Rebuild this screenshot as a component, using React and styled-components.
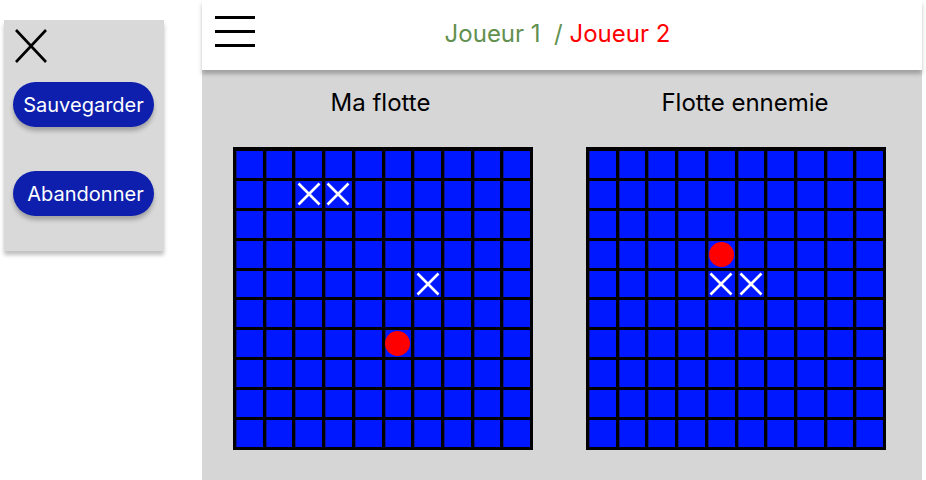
import React from "react";
import styled, { createGlobalStyle } from "styled-components";

const GlobalStyle = createGlobalStyle`
  html, body {
    margin: 0;
    padding: 0;
    background: #ffffff;
    font-family: Inter, "Noto Sans", sans-serif;
  }
  * { box-sizing: border-box; }
`;

const Page = styled.div`
  display: flex;
  align-items: flex-start;
  width: 926px;
  height: 480px;
  overflow: hidden;
`;

const SidePanel = styled.aside`
  width: 160px;
  height: 231px;
  margin: 20px 0 0 4px;
  padding: 9px 10px 0 9px;
  background: #d9d9d9;
  box-shadow: 0 4px 4px rgba(0, 0, 0, 0.25);
  display: flex;
  flex-direction: column;
  align-items: flex-start;
`;

const CloseButton = styled.button`
  width: 32px;
  height: 34px;
  margin-left: 2px;
  padding: 0;
  border: none;
  background: transparent;
  display: block;
  cursor: pointer;
  svg { display: block; }
`;

const ActionButton = styled.button`
  width: 141px;
  height: 45px;
  margin-top: ${(p) => p.$top}px;
  border: none;
  border-radius: 23px;
  background: #0e1fad;
  color: #ffffff;
  font-family: Inter, "Noto Sans", sans-serif;
  font-size: 20px;
  line-height: 24px;
  padding: 0 0 0 ${(p) => p.$pad}px;
  box-shadow: 0 4px 4px rgba(0, 0, 0, 0.25);
  cursor: pointer;
`;

const Main = styled.main`
  width: 720px;
  height: 480px;
  margin-left: 38px;
  background: #d6d6d6;
  display: flex;
  flex-direction: column;
`;

const Header = styled.header`
  height: 70px;
  background: #ffffff;
  box-shadow: 0 4px 4px rgba(0, 0, 0, 0.25);
  display: grid;
  grid-template-columns: 1fr auto 1fr;
  align-items: start;
  position: relative;
  z-index: 1;
`;

const Burger = styled.button`
  justify-self: start;
  margin: 16px 0 0 13px;
  padding: 0;
  width: 40px;
  border: none;
  background: transparent;
  display: flex;
  flex-direction: column;
  gap: 11px;
  cursor: pointer;
`;

const BurgerBar = styled.span`
  display: block;
  width: 40px;
  height: 3px;
  background: #000000;
`;

const Players = styled.h1`
  margin: 19px 9px 0 0;
  font-family: Inter, "Noto Sans", sans-serif;
  font-weight: 400;
  font-size: 24px;
  line-height: 29px;
  white-space: pre;
`;

const Player = styled.span`
  color: ${(p) => p.$color};
`;

const Boards = styled.section`
  display: flex;
  gap: 53px;
  padding: 18px 0 0 31px;
`;

const Board = styled.div`
  width: 300px;
  display: flex;
  flex-direction: column;
  align-items: center;
  gap: 30px;
`;

const BoardTitle = styled.h2`
  margin: 0;
  padding: 0 ${(p) => (p.$shift < 0 ? -p.$shift * 2 : 0)}px 0 ${(p) => (p.$shift > 0 ? p.$shift * 2 : 0)}px;
  font-family: Inter, "Noto Sans", sans-serif;
  font-weight: 400;
  font-size: 24px;
  line-height: 29px;
  color: #000000;
`;

const Grid = styled.div`
  width: 300px;
  height: 303px;
  padding: 4px 3px 3px 3px;
  background: #000000;
  display: grid;
  grid-template-columns: repeat(10, 1fr);
  grid-template-rows: repeat(10, 1fr);
  gap: 3px;
`;

const Cell = styled.div`
  background: #0018ff;
  box-shadow: inset 1px 0 0 #0b1396;
  display: flex;
  align-items: center;
  justify-content: center;
  overflow: visible;
`;

const Hit = styled.span`
  width: 25px;
  height: 25px;
  border-radius: 50%;
  background: #ff0000;
  flex: none;
`;

const Miss = () => (
  <svg width="24" height="24" viewBox="0 0 24 24" style={{ flex: "none" }}>
    <path d="M1.5 1.5 L22.5 22.5 M22.5 1.5 L1.5 22.5" stroke="#ffffff" strokeWidth="2.6" fill="none" />
  </svg>
);

const BoardGrid = ({ marks }) => {
  const cells = [];
  for (let r = 0; r < 10; r++) {
    for (let c = 0; c < 10; c++) {
      const m = marks[`${r},${c}`];
      cells.push(
        <Cell key={`${r}-${c}`}>
          {m === "x" && <Miss />}
          {m === "o" && <Hit />}
        </Cell>
      );
    }
  }
  return <Grid>{cells}</Grid>;
};

const myMarks = { "1,2": "x", "1,3": "x", "4,6": "x", "6,5": "o" };
const enemyMarks = { "3,4": "o", "4,4": "x", "4,5": "x" };

export default function App() {
  return (
    <>
      <GlobalStyle />
      <Page>
        <SidePanel>
          <CloseButton aria-label="Fermer">
            <svg width="32" height="34" viewBox="0 0 32 34">
              <path d="M1 1 L31 33 M31 1 L1 33" stroke="#000000" strokeWidth="2.6" fill="none" />
            </svg>
          </CloseButton>
          <ActionButton $top={19} $pad={0}>Sauvegarder</ActionButton>
          <ActionButton $top={44} $pad={4}>Abandonner</ActionButton>
        </SidePanel>
        <Main>
          <Header>
            <Burger aria-label="Menu">
              <BurgerBar />
              <BurgerBar />
              <BurgerBar />
            </Burger>
            <Players>
              <Player $color="#62904f">{"Joueur 1  /"}</Player>
              <Player $color="#ff0000">{" Joueur 2"}</Player>
            </Players>
            <div />
          </Header>
          <Boards>
            <Board>
              <BoardTitle $shift={-2.5}>Ma flotte</BoardTitle>
              <BoardGrid marks={myMarks} />
            </Board>
            <Board>
              <BoardTitle $shift={9}>Flotte ennemie</BoardTitle>
              <BoardGrid marks={enemyMarks} />
            </Board>
          </Boards>
        </Main>
      </Page>
    </>
  );
}
